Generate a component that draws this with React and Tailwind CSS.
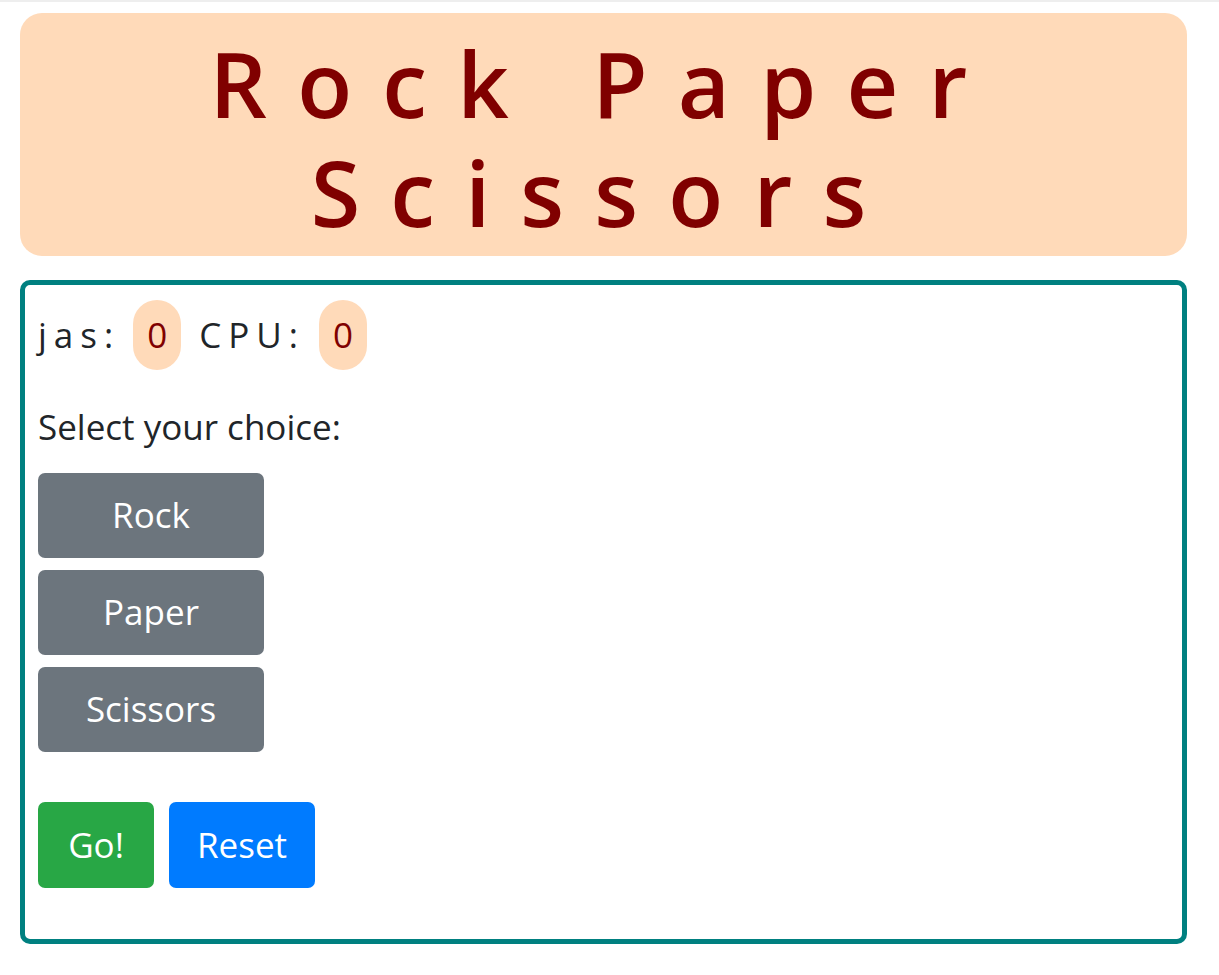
export default function App() {
  return (
    <div className="min-h-screen bg-white font-['Open_Sans',sans-serif] text-[#212529]">
      <div className="h-[2px] bg-[#eeeeee]" />
      <div className="pl-5 pr-8 pt-[11px]">
        <div className="rounded-[22px] bg-[#ffdab9] pt-4 pb-[9px] text-center text-[90px] leading-[109px] font-semibold tracking-[0.335em] text-[#800000]">
          Rock Paper Scissors
        </div>
        <div className="mt-6 rounded-[10px] border-[5px] border-[#008080] px-[13px] pt-[15px] pb-[51px]">
          <div className="flex items-center text-[35px]">
            <span className="tracking-[0.2em]">jas:</span>
            <span className="ml-[13px] flex h-[70px] w-[48px] items-center justify-center rounded-[24px] bg-[#ffdab9] text-[#800000]">0</span>
            <span className="ml-[18px] tracking-[0.2em]">CPU:</span>
            <span className="ml-[14px] flex h-[70px] w-[48px] items-center justify-center rounded-[24px] bg-[#ffdab9] text-[#800000]">0</span>
          </div>
          <div className="mt-[31px] text-[35px] leading-[51px]">Select your choice:</div>
          <div className="mt-[21px] flex flex-col gap-[12px]">
            {["Rock", "Paper", "Scissors"].map((t) => (
              <button key={t} className="flex h-[85px] w-[226px] items-center justify-center rounded-[7px] bg-[#6c757d] text-[35px] text-white">
                {t}
              </button>
            ))}
          </div>
          <div className="mt-[50px] flex gap-[15px]">
            <button className="flex h-[86px] w-[116px] items-center justify-center rounded-[7px] bg-[#28a745] text-[35px] text-white">Go!</button>
            <button className="flex h-[86px] w-[146px] items-center justify-center rounded-[7px] bg-[#007bff] text-[35px] text-white">Reset</button>
          </div>
        </div>
      </div>
    </div>
  );
}
